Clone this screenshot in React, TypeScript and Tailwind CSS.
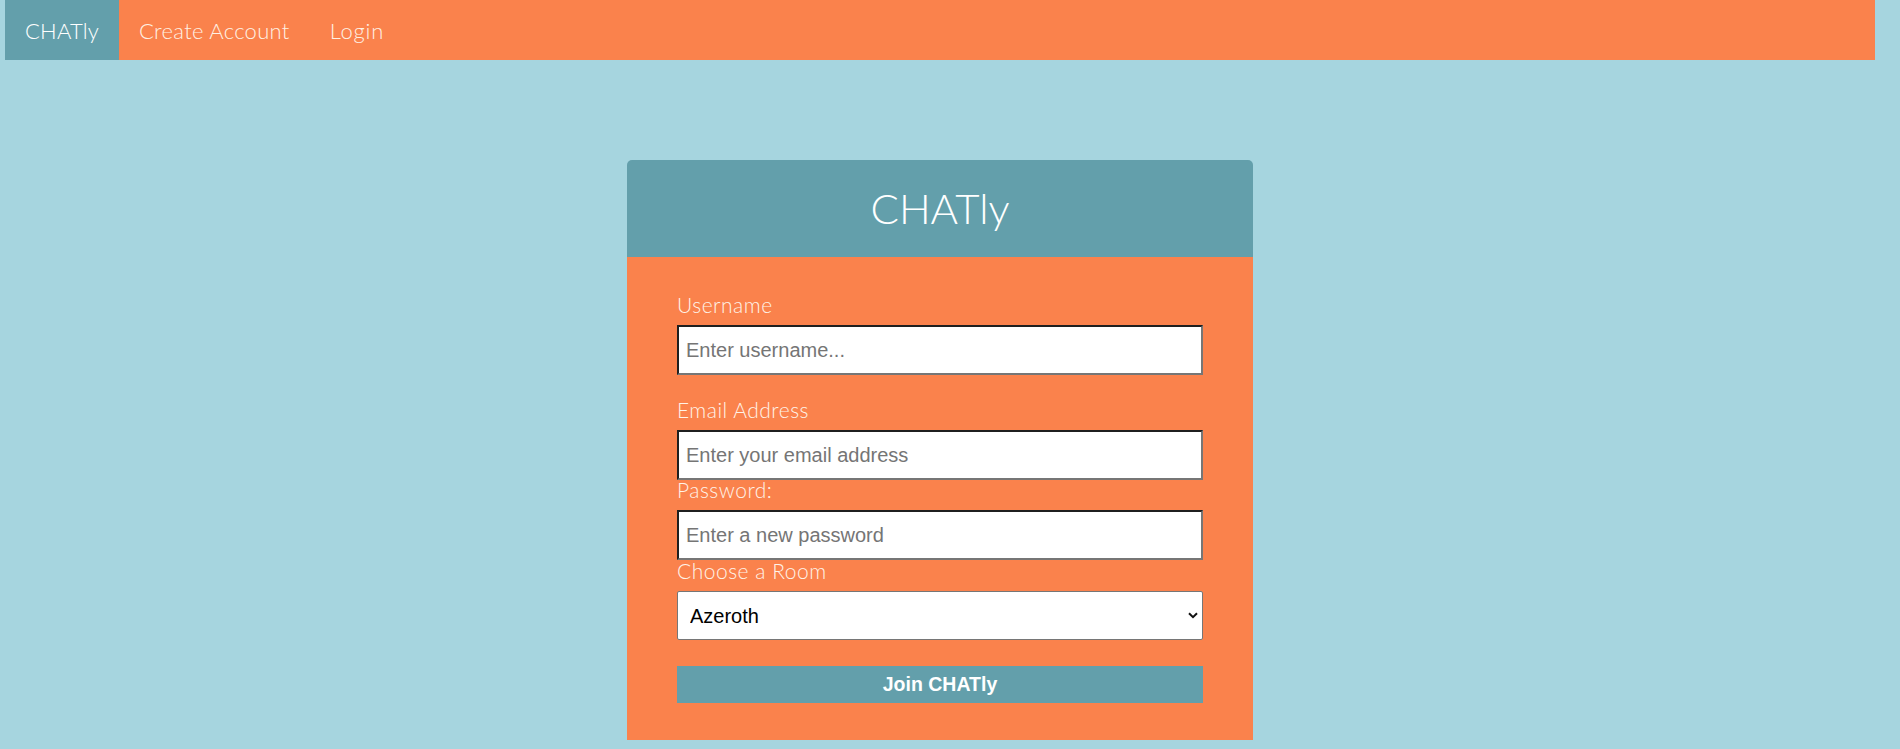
import React from "react";

export default function App() {
  const labelCls =
    "block h-[20px] leading-[20px] text-[21px] tracking-[0.5px] font-light text-[#fff3e8] font-[Lato,'Noto_Sans',sans-serif]";
  const inputCls =
    "mt-[10px] h-[50px] w-full bg-white border-2 border-solid border-t-[#1f1f1f] border-l-[#1f1f1f] border-r-[#767676] border-b-[#767676] px-[7px] text-[20px] text-black placeholder:text-[#757575] outline-none";
  return (
    <div className="w-full h-[749px] overflow-hidden bg-[#a6d5df]">
      <div className="w-[1880px] px-[5px]">
        <nav className="flex h-[60px] bg-[#fa824c] font-[Lato,'Noto_Sans',sans-serif]">
          <a className="flex items-center px-[20px] bg-[#639fab] text-white text-[22px] tracking-[0.2px] font-light">CHATly</a>
          <a className="flex items-center px-[20px] text-[#fff1e4] text-[22px] tracking-[0.3px] font-light">Create Account</a>
          <a className="flex items-center px-[20px] text-[#fff1e4] text-[22px] tracking-[0.8px] font-light">Login</a>
        </nav>
        <div className="mx-auto mt-[100px] w-[626px]">
          <div className="h-[97px] flex items-center justify-center bg-[#639fab] rounded-t-[5px]">
            <h1 className="text-white text-[42px] font-light font-[Lato,'Noto_Sans',sans-serif]">CHATly</h1>
          </div>
          <form className="bg-[#fa824c] px-[50px] pt-[38px] pb-[37px] flex flex-col font-[Liberation_Sans,Arial,sans-serif]">
            <label className={labelCls}>Username</label>
            <input type="text" placeholder="Enter username..." className={inputCls} />
            <label className={"mt-[25px] " + labelCls}>Email Address</label>
            <input type="email" placeholder="Enter your email address" className={inputCls} />
            <label className={labelCls}>Password:</label>
            <input type="password" placeholder="Enter a new password" className={inputCls} />
            <label className={"mt-px " + labelCls}>Choose a Room</label>
            <div className="relative mt-[10px]">
              <select className="appearance-none h-[49px] w-full bg-white border border-solid border-[#767676] rounded-[2px] pl-[12px] text-[20px] text-black outline-none">
                <option>Azeroth</option>
                <option>Outland</option>
                <option>Northrend</option>
              </select>
              <svg className="pointer-events-none absolute right-[5px] top-[21px]" width="10" height="7" viewBox="0 0 10 7" fill="none">
                <path d="M1 1.2 L5 5.2 L9 1.2" stroke="#111" strokeWidth="2" />
              </svg>
            </div>
            <button type="button" className="mt-[26px] h-[37px] w-full bg-[#639fab] text-white text-[19.5px] font-bold">
              Join CHATly
            </button>
          </form>
        </div>
      </div>
    </div>
  );
}
